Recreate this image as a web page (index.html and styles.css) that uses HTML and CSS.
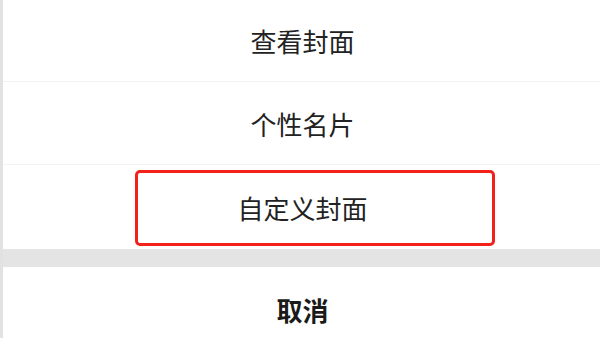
FILE: index.html
```html
<!DOCTYPE html>
<html lang="zh-CN">
<head>
<meta charset="utf-8">
<link rel="stylesheet" href="styles.css">
</head>
<body>
<div class="sheet">
  <div class="options">
    <div class="item item-first">查看封面</div>
    <div class="item">个性名片</div>
    <div class="item item-last">自定义封面<span class="highlight"></span></div>
  </div>
  <div class="gap"></div>
  <div class="item cancel">取消</div>
</div>
</body>
</html>
```

FILE: styles.css
```css
html, body {
  margin: 0;
  padding: 0;
  background: #ffffff;
}
body {
  width: 600px;
  height: 338px;
  overflow: hidden;
  font-family: "Noto Sans CJK SC", "Noto Sans", sans-serif;
}
.sheet {
  display: flex;
  flex-direction: column;
  border-left: 3px solid #e2e2e2;
  height: 338px;
  overflow: hidden;
}
.options {
  display: flex;
  flex-direction: column;
  flex-shrink: 0;
}
.item {
  position: relative;
  display: flex;
  align-items: center;
  justify-content: center;
  flex-shrink: 0;
  height: 82px;
  font-size: 26px;
  color: #222222;
  border-bottom: 1px solid #f2f2f2;
  padding-left: 2px;
}
.item-first {
  height: 81px;
}
.item-last {
  height: 84px;
  border-bottom: none;
}
.highlight {
  position: absolute;
  left: 132px;
  top: 5px;
  width: 354px;
  height: 70px;
  border: 3px solid #f2221b;
  border-radius: 5px;
}
.gap {
  flex-shrink: 0;
  height: 18px;
  background: #e4e4e4;
}
.cancel {
  height: 84px;
  font-weight: 700;
  color: #1a1a1a;
  border-bottom: none;
}
```
